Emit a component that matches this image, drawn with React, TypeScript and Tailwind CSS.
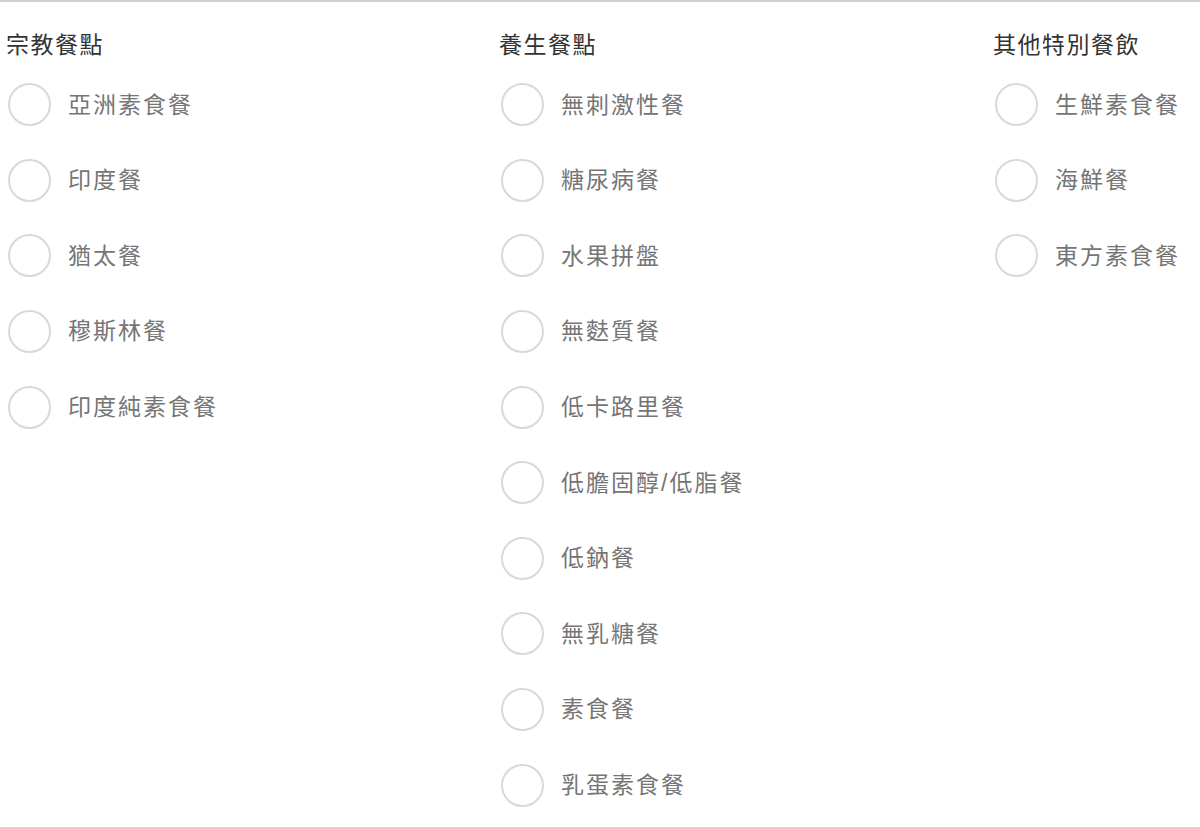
import React, { useState } from 'react';

const GROUPS: { title: string; items: string[] }[] = [
  { title: '宗教餐點', items: ['亞洲素食餐', '印度餐', '猶太餐', '穆斯林餐', '印度純素食餐'] },
  {
    title: '養生餐點',
    items: ['無刺激性餐', '糖尿病餐', '水果拼盤', '無麩質餐', '低卡路里餐', '低膽固醇/低脂餐', '低鈉餐', '無乳糖餐', '素食餐', '乳蛋素食餐'],
  },
  { title: '其他特別餐飲', items: ['生鮮素食餐', '海鮮餐', '東方素食餐'] },
];

const App: React.FC = () => {
  const [selected, setSelected] = useState<string>('');

  return (
    <div className="w-[1200px] h-[827px] bg-white overflow-hidden font-['Liberation_Sans','Noto_Sans_CJK_TC',sans-serif]">
      <div className="border-t-2 border-[#cfcfcf]" />
      <div className="grid grid-cols-[493px_494px_1fr] pt-[26px]">
        {GROUPS.map((g) => (
          <div key={g.title} className="pl-[6px]">
            <h3 className="text-[23px] leading-[34px] tracking-[1.5px] text-[#333] font-normal">{g.title}</h3>
            <ul className="mt-[5px]">
              {g.items.map((item) => (
                <li key={item}>
                  <label className="flex items-center h-[75.6px] cursor-pointer" onClick={() => setSelected(item)}>
                    <span className="ml-[2px] w-[43px] h-[43px] rounded-full border-2 border-[#d9d9d9] bg-white flex items-center justify-center shrink-0">
                      {selected === item && <span className="w-[21px] h-[21px] rounded-full bg-[#666]" />}
                    </span>
                    <span className="ml-[17px] text-[23px] tracking-[2px] text-[#757575]">{item}</span>
                  </label>
                </li>
              ))}
            </ul>
          </div>
        ))}
      </div>
    </div>
  );
};

export default App;
